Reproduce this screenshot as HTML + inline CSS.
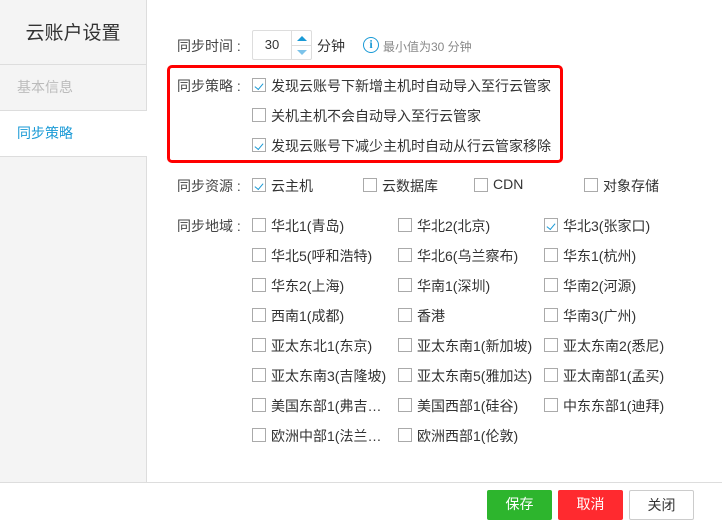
<!DOCTYPE html>
<html><head><meta charset="utf-8"><style>
*{box-sizing:border-box;margin:0;padding:0}
body{width:722px;height:526px;position:relative;background:#fff;font-family:"Liberation Sans","Noto Sans CJK SC",sans-serif;font-size:14px;color:#333;overflow:hidden}
.side{position:absolute;left:0;top:0;width:147px;height:482px;background:#f4f4f4;border-right:1px solid #ddd}
.side .t{height:65px;line-height:68px;text-align:center;font-size:19px;color:#333;border-bottom:1px solid #ddd}
.side .i{height:46px;line-height:45px;padding-left:17px;color:#bbb;border-bottom:1px solid #ddd}
.side .a{background:#fff;color:#1a9ad6;width:147px}
.lab{position:absolute;left:177px;color:#444;white-space:pre}
.cb{position:absolute;width:14px;height:14px;border:1px solid #aaa;background:#fff}
.cb.on::after{content:"";position:absolute;left:3px;top:1px;width:7px;height:4px;border-left:1.5px solid #1a9ad6;border-bottom:1.5px solid #1a9ad6;transform:translate(-1px,3px) rotate(-50deg)}
.tx{position:absolute;white-space:nowrap}
.foot{position:absolute;left:0;top:482px;width:722px;height:44px;border-top:1px solid #ddd;background:#fff}
.btn{position:absolute;top:490px;width:65px;height:30px;line-height:29px;text-align:center;border-radius:2px;font-size:14px}
</style></head><body>
<div class="side"><div class="t">云账户设置</div><div class="i">基本信息</div><div class="i a">同步策略</div></div>

<div class="lab" style="top:36px">同步时间 :</div>
<div style="position:absolute;left:252px;top:30px;width:60px;height:30px;border:1px solid #ddd;border-radius:2px">
<div style="position:absolute;left:0;top:0;width:38px;height:28px;line-height:28px;text-align:center;font-size:13px">30</div>
<div style="position:absolute;left:38px;top:0;width:1px;height:28px;background:#ddd"></div>
<div style="position:absolute;left:39px;top:14px;width:20px;height:1px;background:#ddd"></div>
<div style="position:absolute;left:44px;top:5px;border-left:5px solid transparent;border-right:5px solid transparent;border-bottom:5px solid #1a9ad6"></div>
<div style="position:absolute;left:44px;top:19px;border-left:5px solid transparent;border-right:5px solid transparent;border-top:5px solid #7cc3ea"></div>
</div>
<div class="tx" style="left:317px;top:36px">分钟</div>
<div style="position:absolute;left:363px;top:37px;width:16px;height:16px;border:1.5px solid #1a9ad6;border-radius:50%;color:#1a9ad6;font-size:12px;font-weight:bold;text-align:center;line-height:13px;font-family:'Liberation Serif',serif">i</div>
<div class="tx" style="left:383px;top:38px;font-size:12px;color:#888">最小值为30 分钟</div>

<div style="position:absolute;left:167px;top:65px;width:396px;height:98px;border:3px solid #f00;border-radius:5px"></div>
<div class="lab" style="top:76px">同步策略 :</div>
<div class="cb on" style="left:252px;top:78px"></div><div class="tx" style="left:271px;top:76px">发现云账号下新增主机时自动导入至行云管家</div>
<div class="cb" style="left:252px;top:108px"></div><div class="tx" style="left:271px;top:106px">关机主机不会自动导入至行云管家</div>
<div class="cb on" style="left:252px;top:138px"></div><div class="tx" style="left:271px;top:136px">发现云账号下减少主机时自动从行云管家移除</div>

<div class="lab" style="top:176px">同步资源 :</div>
<div class="cb on" style="left:252px;top:178px"></div><div class="tx" style="left:271px;top:176px">云主机</div>
<div class="cb" style="left:363px;top:178px"></div><div class="tx" style="left:382px;top:176px">云数据库</div>
<div class="cb" style="left:474px;top:178px"></div><div class="tx" style="left:493px;top:176px">CDN</div>
<div class="cb" style="left:584px;top:178px"></div><div class="tx" style="left:603px;top:176px">对象存储</div>

<div class="lab" style="top:216px">同步地域 :</div>
<div class="cb" style="left:252px;top:218px"></div><div class="tx" style="left:271px;top:216px">华北1(青岛)</div>
<div class="cb" style="left:398px;top:218px"></div><div class="tx" style="left:417px;top:216px">华北2(北京)</div>
<div class="cb on" style="left:544px;top:218px"></div><div class="tx" style="left:563px;top:216px">华北3(张家口)</div>
<div class="cb" style="left:252px;top:248px"></div><div class="tx" style="left:271px;top:246px">华北5(呼和浩特)</div>
<div class="cb" style="left:398px;top:248px"></div><div class="tx" style="left:417px;top:246px">华北6(乌兰察布)</div>
<div class="cb" style="left:544px;top:248px"></div><div class="tx" style="left:563px;top:246px">华东1(杭州)</div>
<div class="cb" style="left:252px;top:278px"></div><div class="tx" style="left:271px;top:276px">华东2(上海)</div>
<div class="cb" style="left:398px;top:278px"></div><div class="tx" style="left:417px;top:276px">华南1(深圳)</div>
<div class="cb" style="left:544px;top:278px"></div><div class="tx" style="left:563px;top:276px">华南2(河源)</div>
<div class="cb" style="left:252px;top:308px"></div><div class="tx" style="left:271px;top:306px">西南1(成都)</div>
<div class="cb" style="left:398px;top:308px"></div><div class="tx" style="left:417px;top:306px">香港</div>
<div class="cb" style="left:544px;top:308px"></div><div class="tx" style="left:563px;top:306px">华南3(广州)</div>
<div class="cb" style="left:252px;top:338px"></div><div class="tx" style="left:271px;top:336px">亚太东北1(东京)</div>
<div class="cb" style="left:398px;top:338px"></div><div class="tx" style="left:417px;top:336px">亚太东南1(新加坡)</div>
<div class="cb" style="left:544px;top:338px"></div><div class="tx" style="left:563px;top:336px">亚太东南2(悉尼)</div>
<div class="cb" style="left:252px;top:368px"></div><div class="tx" style="left:271px;top:366px">亚太东南3(吉隆坡)</div>
<div class="cb" style="left:398px;top:368px"></div><div class="tx" style="left:417px;top:366px">亚太东南5(雅加达)</div>
<div class="cb" style="left:544px;top:368px"></div><div class="tx" style="left:563px;top:366px">亚太南部1(孟买)</div>
<div class="cb" style="left:252px;top:398px"></div><div class="tx" style="left:271px;top:396px">美国东部1(弗吉…</div>
<div class="cb" style="left:398px;top:398px"></div><div class="tx" style="left:417px;top:396px">美国西部1(硅谷)</div>
<div class="cb" style="left:544px;top:398px"></div><div class="tx" style="left:563px;top:396px">中东东部1(迪拜)</div>
<div class="cb" style="left:252px;top:428px"></div><div class="tx" style="left:271px;top:426px">欧洲中部1(法兰…</div>
<div class="cb" style="left:398px;top:428px"></div><div class="tx" style="left:417px;top:426px">欧洲西部1(伦敦)</div>

<div class="foot"></div>
<div class="btn" style="left:487px;background:#2db52d;color:#fff">保存</div>
<div class="btn" style="left:558px;background:#ff2a2f;color:#fff">取消</div>
<div class="btn" style="left:629px;background:#fff;border:1px solid #ccc;color:#333">关闭</div>
</body></html>
